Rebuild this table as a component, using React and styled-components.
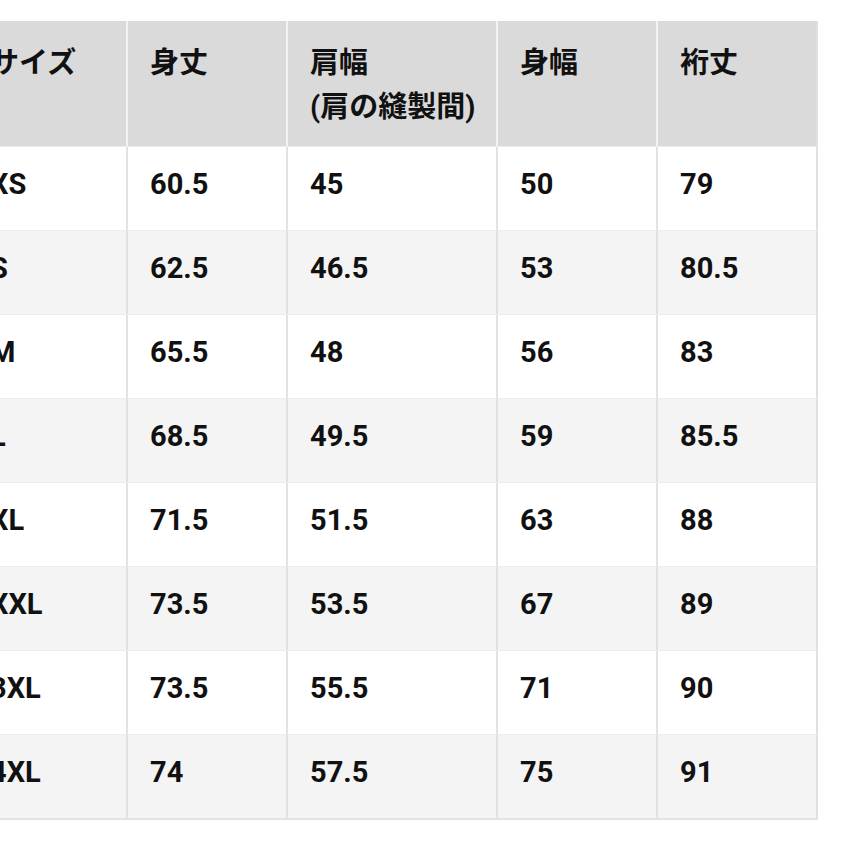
import React from 'react'
import styled, { createGlobalStyle } from 'styled-components';

const GlobalStyle = createGlobalStyle`
    html, body {
        margin: 0;
        padding: 0;
        background: #ffffff;
        overflow: hidden;
    }
`

const Page = styled.div`
    width: 850px;
    height: 850px;
    padding-top: 21px;
    box-sizing: border-box;
    overflow: hidden;
    font-family: Roboto, "Noto Sans CJK JP", sans-serif;
    font-weight: 700;
    color: #111111;
`
// table is cropped on the left, so it starts left of the viewport
const Table = styled.div`
    width: 850px;
    margin-left: -32px;
    border-bottom: 2px solid #e2e2e2;
`
const Row = styled.div`
    display: grid;
    grid-template-columns: 160px 160px 210px 160px 160px;
    height: ${p => p.$head ? '125px' : '84px'};
    background: ${p => p.$head ? '#dadada' : p.$alt ? '#f4f4f4' : '#ffffff'};
    border-top: ${p => p.$head ? 'none' : '1px solid #ececec'};
    box-sizing: border-box;
`
const Cell = styled.div`
    box-sizing: border-box;
    padding: ${p => p.$head ? '20px' : '15px'} 0 0 22px;
    font-size: 29px;
    line-height: 44px;
    white-space: pre-line;
    border-right: 2px solid ${p => p.$head ? '#f3f3f3' : '#e2e2e2'};
    &:last-child {
        border-right-color: #e0e0e0;
    }
`

const headers = ['サイズ', '身丈', '肩幅\n(肩の縫製間)', '身幅', '裄丈']

const rows = [
    ['XS', '60.5', '45', '50', '79'],
    ['S', '62.5', '46.5', '53', '80.5'],
    ['M', '65.5', '48', '56', '83'],
    ['L', '68.5', '49.5', '59', '85.5'],
    ['XL', '71.5', '51.5', '63', '88'],
    ['XXL', '73.5', '53.5', '67', '89'],
    ['3XL', '73.5', '55.5', '71', '90'],
    ['4XL', '74', '57.5', '75', '91'],
]

const App = () => {
    return (
        <Page>
            <GlobalStyle />
            <Table>
                <Row $head>
                    {headers.map(h => (
                        <Cell $head key={h}>{h}</Cell>
                    ))}
                </Row>
                {rows.map((r, i) => (
                    <Row key={r[0]} $alt={i % 2 === 1}>
                        {r.map((v, j) => (
                            <Cell key={j}>{v}</Cell>
                        ))}
                    </Row>
                ))}
            </Table>
        </Page>
    )
}

export default App
